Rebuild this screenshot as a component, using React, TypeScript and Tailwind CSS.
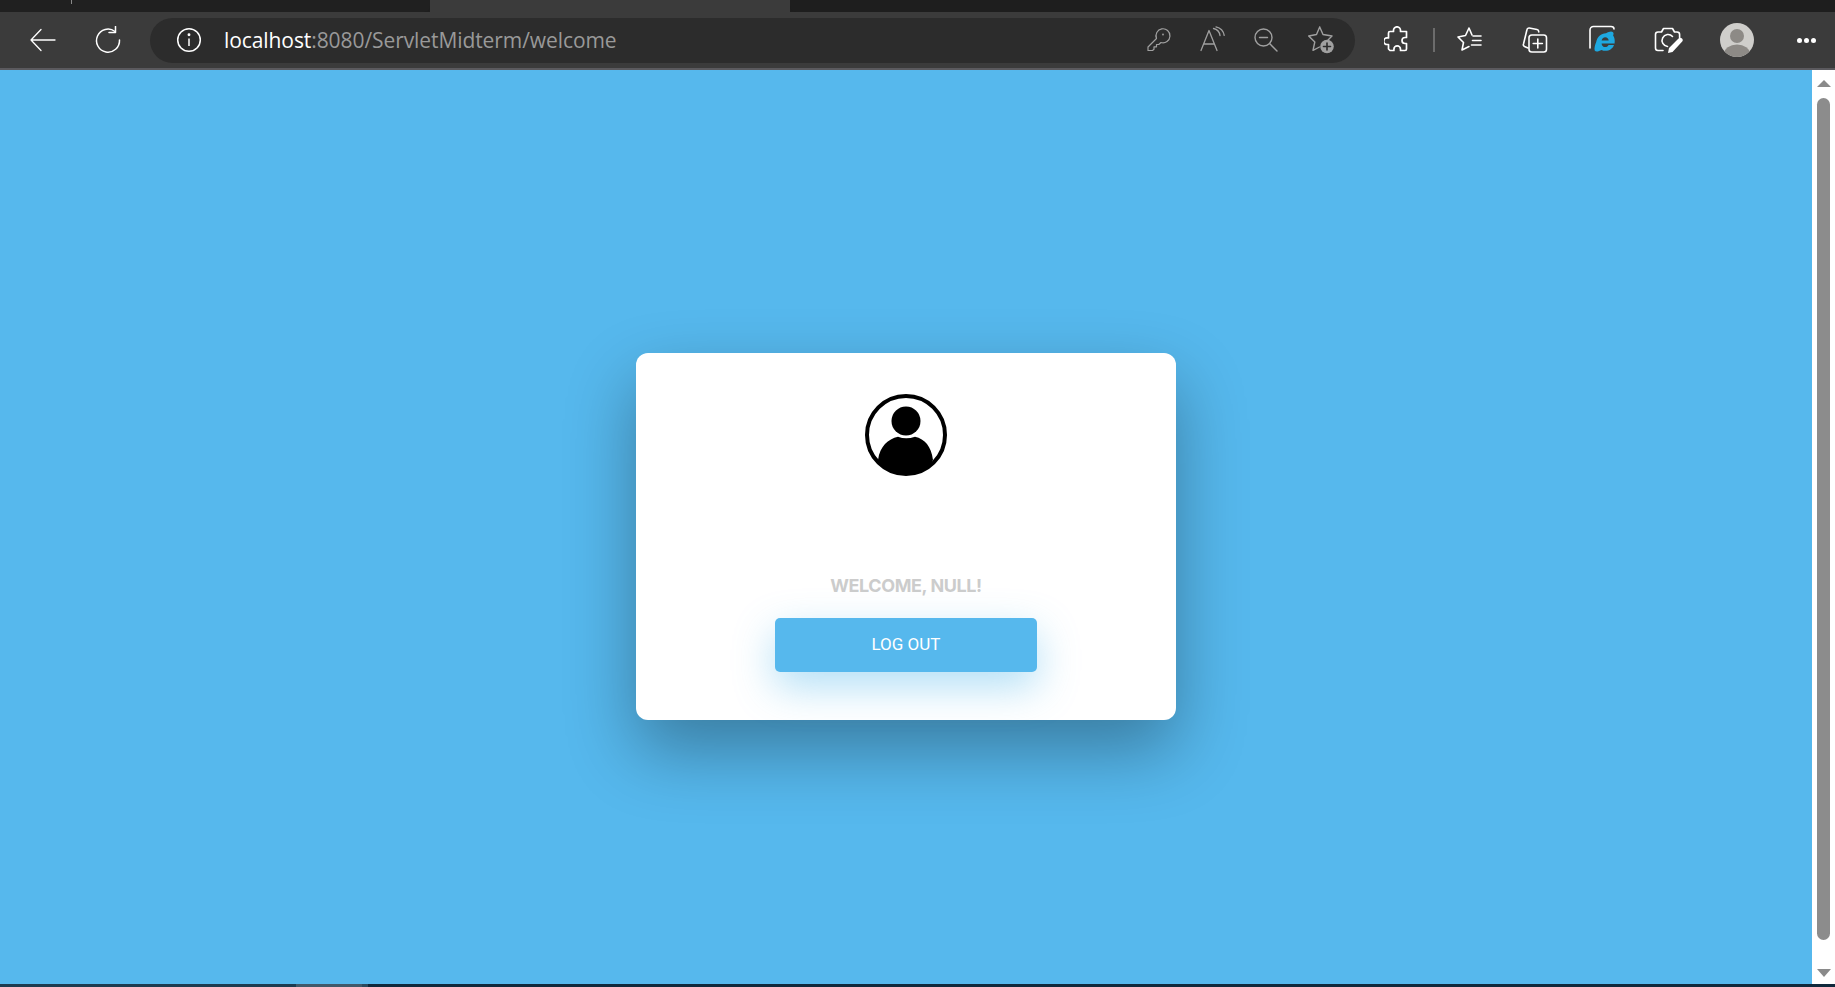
import React from "react";

const Ico = ({ children, w = 28, h = 28, vb = "0 0 28 28" }: { children: React.ReactNode; w?: number; h?: number; vb?: string }) => (
  <svg width={w} height={h} viewBox={vb} fill="none" stroke="currentColor" strokeWidth={1.4} strokeLinecap="round" strokeLinejoin="round" className="shrink-0">
    {children}
  </svg>
);

const Slot = ({ w, children }: { w: string; children: React.ReactNode }) => (
  <div className={`flex items-center justify-center shrink-0 ${w}`}>{children}</div>
);

export default function App() {
  return (
    <div className="flex flex-col h-[987px] w-[1835px] overflow-hidden bg-[#3b3b3b] font-['Open_Sans',sans-serif]">
      {/* tab strip */}
      <div className="flex h-3 shrink-0 bg-[#1e1e1e]">
        <div className="w-[430px] h-3 bg-[#202020] rounded-br-md relative">
          <div className="absolute left-[71px] top-0 h-1 w-px bg-[#8a8a8a]" />
        </div>
        <div className="w-[360px] h-3 bg-[#3b3b3b]" />
        <div className="flex-1 h-3 bg-[#1e1e1e] rounded-bl-md" />
      </div>

      {/* toolbar */}
      <div className="flex items-center h-[58px] shrink-0 bg-[#3b3b3b] border-b-2 border-[#5b5a5e] text-white">
        <Slot w="w-[84px]">
          <Ico w={28} h={28}>
            <path d="M27 14H3M13 3.500 3 14l10 10.500" strokeWidth={1.3} />
          </Ico>
        </Slot>
        <Slot w="w-[48px]">
          <Ico w={28} h={28}>
            <path d="M21 5.500A11.500 11.500 0 1 0 25.500 14" strokeWidth={1.5} />
            <path d="M21.500 0.500v6h-6.500" strokeWidth={1.5} />
          </Ico>
        </Slot>
        <div className="ml-[18px] w-[1205px] shrink-0 h-[45px] rounded-full bg-[#2c2c2c] flex items-center">
          <div className="w-[74px] flex justify-center pl-[3px]">
            <svg width="26" height="26" viewBox="0 0 26 26" fill="none" stroke="currentColor" strokeWidth="1.5">
              <circle cx="13" cy="13" r="11.300" />
              <path d="M13 11.500v7.500" />
              <circle cx="13" cy="7.800" r="0.700" fill="currentColor" />
            </svg>
          </div>
          <div className="text-[21px] leading-none tracking-[-0.08px] font-['Open_Sans',sans-serif]">
            <span className="text-white">localhost</span>
            <span className="text-[#999999]">:8080/ServletMidterm/welcome</span>
          </div>
          <div className="ml-auto flex items-center text-[#a0a0a0] mr-[7px]">
            <Slot w="w-[54px]">
              <Ico>
                <path d="M5 24.500v-3.500L13.500 12.500a7 7 0 1 1 4.500 4L15.800 18.500h-2.300v2.300h-2.500v2.500L9.500 24.500z" strokeWidth={1.2} />
                <circle cx="20" cy="8.500" r="0.900" fill="currentColor" stroke="none" />
              </Ico>
            </Slot>
            <Slot w="w-[55px]">
              <Ico>
                <path d="M3 24.500 11 4.500l8 20M5.800 18h10.400" strokeWidth={1.3} />
                <path d="M15.500 2.500c3.500.8 6 3.500 6.500 7M18 0.800c4.500 1 7.500 4.500 8.200 8.500" strokeWidth={1.3} />
              </Ico>
            </Slot>
            <Slot w="w-[54px]">
              <Ico>
                <circle cx="11.500" cy="11.500" r="8.500" strokeWidth={1.4} />
                <path d="M7.500 11.500h8M17.800 17.800 25 25" strokeWidth={1.4} />
              </Ico>
            </Slot>
            <Slot w="w-[55px]">
              <Ico w={28} h={28}>
                <path d="M12.700 1 16 8.500 25 10 21 14M12.700 1 9.500 8.500 1.700 10 7.800 16 6 24.300 12.500 21" strokeWidth={1.4} />
                <circle cx="20" cy="20.500" r="6.800" fill="#a0a0a0" stroke="none" />
                <path d="M20 17v7M16.500 20.500h7" stroke="#2c2c2c" strokeWidth={1.6} />
              </Ico>
            </Slot>
          </div>
        </div>
        <div className="ml-[6px]">
          <Slot w="w-[72px]">
            <Ico w={26} h={28} vb="0 0 26 28">
              <path d="M9.500 5.500V4.300a3.500 3.500 0 0 1 7 0v1.200h6v6h-1.500a3 3 0 0 0 0 6h1.500v5.500c0 .8-.6 1.500-1.500 1.500h-4.500v-1.300a3.300 3.300 0 0 0-6.600 0V24.500H6l-1.500-1.500v-4.500H3a3.300 3.300 0 0 1 0-6.600h1.500V7c0-.8.700-1.500 1.500-1.500z" strokeWidth={1.7} />
            </Ico>
          </Slot>
        </div>
        <div className="w-[2px] h-[24px] bg-[#6c6c6c] shrink-0" />
        <Slot w="w-[70px]">
          <Ico w={26} h={26} vb="0 0 26 26">
            <path d="M15 8 12 1 8.500 8.500 1 10l5.500 5.500L5 23l7-3.500" strokeWidth={1.6} />
            <path d="M16 9h8M15.500 13.500H24M14.500 18H24" strokeWidth={1.6} />
          </Ico>
        </Slot>
        <Slot w="w-[60px]">
          <Ico w={30} h={32} vb="0 0 30 32">
            <path d="M8 24 4.500 22.500c-1-.5-1.500-1.500-1-2.500L7 5.500c.2-1 1.300-1.700 2.300-1.500L17 5.500c1 .2 1.800 1 1.800 2.500" strokeWidth={1.6} />
            <rect x="9" y="11" width="17.500" height="17" rx="2.800" strokeWidth={1.6} />
            <path d="M17.800 15v9M13.200 19.500h9.200" strokeWidth={1.6} />
          </Ico>
        </Slot>
        <Slot w="w-[74px]">
          <svg width="32" height="34" viewBox="0 0 32 34" fill="none">
            <path d="M4 25V7c0-2 1.500-3.500 3.500-3.500h17.500c2 0 3 1 3 2.500" stroke="#fff" strokeWidth="1.600" strokeLinecap="round" />
            <path d="M25 8.500c-1.200.2-3.200.8-5 1.700-5 0-8.800 3.800-9.800 8.700-1 2.200-2.200 6.500-1.500 8.500 1 1.700 4 1 6.800-.5 1.300.6 2.700.8 4 .8 4 0 7.300-2.300 8.500-5.800h-5.500c-.6 1.400-1.700 2.200-3.200 2.200-2.200 0-3.600-1.700-3.700-3.700h13c.5-3.500-.2-6.500-1.500-8 .8-1.500.8-3.700-2.100-3.900zM15.600 17.500c.3-1.800 1.800-3.200 3.600-3.200 2 0 3.300 1.300 3.500 3.200z" fill="#1ea8e0" fillRule="evenodd" />
          </svg>
        </Slot>
        <Slot w="w-[60px]">
          <Ico w={32} h={30} vb="0 0 32 30">
            <path d="M10 25.500H5c-1.400 0-2.500-1-2.500-2.500V9.500C2.500 8 3.600 7 5 7h3.500l2-3.500h9l2 3.500H24c1.500 0 2.600 1 2.600 2.500v3" strokeWidth={1.6} />
            <path d="M19.500 11.500a6 6 0 1 0-5 10" strokeWidth={1.6} />
            <path d="M15 28l1-5 9.500-9.500c1-1 2.500-1 3.500 0s1 2.300 0 3.300L19.500 27z" fill="#fff" stroke="none" />
          </Ico>
        </Slot>
        <Slot w="w-[76px]">
          <svg width="34" height="34" viewBox="0 0 34 34">
            <defs>
              <clipPath id="ava"><circle cx="17" cy="17" r="17" /></clipPath>
            </defs>
            <g clipPath="url(#ava)">
              <rect width="34" height="34" fill="#cfcecb" />
              <circle cx="17" cy="13" r="7" fill="#8d8a86" />
              <ellipse cx="17" cy="31" rx="13" ry="9.500" fill="#8d8a86" />
            </g>
          </svg>
        </Slot>
        <Slot w="w-[60px] pl-[3px]">
          <div className="flex gap-[2px]">
            <span className="w-[5px] h-[5px] rounded-full bg-white" />
            <span className="w-[5px] h-[5px] rounded-full bg-white" />
            <span className="w-[5px] h-[5px] rounded-full bg-white" />
          </div>
        </Slot>
      </div>

      {/* page */}
      <div className="flex flex-1 min-h-0">
        <main className="flex-1 bg-[#56b8ed] flex justify-center pt-[283px]">
          <div className="w-[540px] h-[367px] bg-white rounded-[12px] shadow-[0_30px_70px_rgba(0,0,0,0.33)] flex flex-col items-center pt-[41px]">
            <svg width="82" height="82" viewBox="0 0 82 82" className="shrink-0">
              <defs>
                <clipPath id="clipc"><circle cx="41" cy="41" r="39" /></clipPath>
              </defs>
              <circle cx="41" cy="41" r="39" fill="none" stroke="#000" strokeWidth="4" />
              <circle cx="41" cy="27" r="14.500" fill="#000" />
              <path d="M13 66C15 52 23 45 33 42.700Q41 46 50 42.700C60 45 66 52 68 66L60 80H22z" fill="#000" clipPath="url(#clipc)" />
            </svg>
            <h1 className="mt-[98px] text-[18px] leading-[24px] font-bold tracking-[-0.42px] text-[#cccccc] font-['Inter',sans-serif]">WELCOME, NULL!</h1>
            <button className="mt-[20px] w-[262px] h-[54px] bg-[#56b8ed] rounded-[5px] text-white text-[17px] font-['Roboto',sans-serif] shadow-[0_15px_40px_rgba(85,184,236,0.45)]">LOG OUT</button>
          </div>
        </main>
        <aside className="w-[23px] shrink-0 bg-white flex flex-col items-center">
          <div className="mt-[10px] w-0 h-0 border-l-[7px] border-r-[7px] border-b-[7px] border-l-transparent border-r-transparent border-b-[#8a8a8a]" />
          <div className="mt-[11px] w-[13px] h-[842px] rounded-full bg-[#8c8c8c]" />
          <div className="mt-[29px] w-0 h-0 border-l-[7px] border-r-[7px] border-t-[8px] border-l-transparent border-r-transparent border-t-[#8a8a8a]" />
        </aside>
      </div>

      {/* taskbar sliver */}
      <div className="flex h-[3px] shrink-0 bg-[#10293c]">
        <div className="w-[296px] bg-[#1d3b50]" />
        <div className="w-[66px] bg-[#40596a]" />
        <div className="w-[6px] bg-[#2b4a5d]" />
      </div>
    </div>
  );
}
